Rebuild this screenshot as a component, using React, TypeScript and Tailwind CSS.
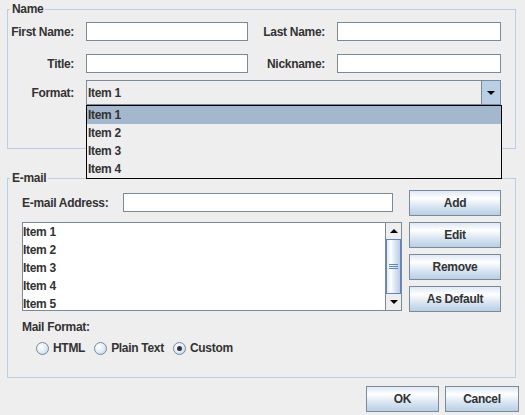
import React from "react";

function TextField({ className = "" }: { className?: string }) {
  return <div className={`h-[19px] bg-white border border-[#7a8a99] ${className}`} />;
}

function Btn({ children, className = "" }: { children: React.ReactNode; className?: string }) {
  return (
    <button
      className={`h-[26px] border border-[#7a8a99] bg-[linear-gradient(to_bottom,#dde8f3_0%,#ffffff_30%,#dde8f3_60%,#b8cfe5_100%)] text-[12px] font-bold text-[#333333] leading-none ${className}`}
    >
      {children}
    </button>
  );
}

function Radio({ label, checked = false }: { label: string; checked?: boolean }) {
  return (
    <label className="flex items-center gap-[4px]">
      <span className="w-[13px] h-[13px] rounded-full border border-[#7a8a99] bg-[radial-gradient(circle_at_35%_35%,#ffffff_0%,#e6eef7_45%,#b8cfe5_100%)] flex items-center justify-center">
        {checked && <span className="w-[5px] h-[5px] rounded-full bg-[#333333]" />}
      </span>
      {label}
    </label>
  );
}

function UpArrow() {
  return <span className="w-0 h-0 border-x-[4px] border-x-transparent border-b-[4px] border-b-black" />;
}

function DownArrow() {
  return <span className="w-0 h-0 border-x-[4px] border-x-transparent border-t-[4px] border-t-black" />;
}

function Label({ children, className = "" }: { children: React.ReactNode; className?: string }) {
  return <span className={`flex justify-end whitespace-nowrap ${className}`}>{children}</span>;
}

export default function App() {
  const comboItems = ["Item 1", "Item 2", "Item 3", "Item 4"];
  const listItems = ["Item 1", "Item 2", "Item 3", "Item 4", "Item 5"];

  return (
    <div className="w-[525px] h-[415px] overflow-hidden bg-[#eeeeee] pt-[2px] text-[12px] font-bold text-[#333333] font-['Liberation_Sans',Arial,sans-serif] leading-[14px] tracking-[-0.3px]">

      {/* Name group */}
      <fieldset className="ml-[7px] w-[509px] border border-[#b8cfe5] pt-[6px] pb-[43px]">
        <legend className="ml-[2px] px-[2px] leading-[14px]">Name</legend>

        <div className="flex items-center">
          <Label className="w-[66px]">First Name:</Label>
          <TextField className="ml-[12px] w-[162px]" />
          <Label className="w-[77px]">Last Name:</Label>
          <TextField className="ml-[12px] w-[164px]" />
        </div>

        <div className="flex items-center mt-[13px]">
          <Label className="w-[66px]">Title:</Label>
          <TextField className="ml-[12px] w-[162px]" />
          <Label className="w-[77px]">Nickname:</Label>
          <TextField className="ml-[12px] w-[164px]" />
        </div>

        <div className="flex items-center mt-[7px]">
          <Label className="w-[66px]">Format:</Label>
          <div className="relative ml-[12px] w-[415px] h-[25px] flex border border-[#7a8a99] bg-[#eeeeee]">
            <span className="flex-1 pl-[1px] flex items-center">Item 1</span>
            <span className="w-[19px] border-l border-[#7a8a99] bg-[#b8cfe5] flex items-center justify-center">
              <DownArrow />
            </span>

            {/* open popup */}
            <div className="absolute left-[-1px] top-[24px] w-[416px] border border-black bg-[#eeeeee] z-10">
              {comboItems.map((it, i) => (
                <div
                  key={it}
                  className={`h-[18px] leading-[18px] pl-[1px] ${i === 0 ? "bg-[#a3b8cc]" : ""}`}
                >
                  {it}
                </div>
              ))}
            </div>
          </div>
        </div>
      </fieldset>

      {/* E-mail group */}
      <fieldset className="ml-[7px] mt-[22px] w-[509px] border border-[#b8cfe5] pb-[22px]">
        <legend className="ml-[2px] px-[2px] leading-[14px]">E-mail</legend>

        <div className="flex">
          <div className="ml-[14px] w-[380px] pt-[8px]">
            <div className="flex items-center">
              <span className="w-[101px] whitespace-nowrap">E-mail Address:</span>
              <TextField className="w-[270px]" />
            </div>

            <div className="mt-[10px] h-[89px] flex bg-white border border-[#7a8a99]">
              <div className="flex-1">
                {listItems.map((it) => (
                  <div key={it} className="h-[18px] leading-[18px]">{it}</div>
                ))}
              </div>
              {/* scrollbar */}
              <div className="w-[16px] flex flex-col border-l border-[#7a8a99] bg-[#eeeeee]">
                <div className="h-[16px] flex items-center justify-center">
                  <UpArrow />
                </div>
                <div className="flex-1 border border-[#6382bf] bg-[linear-gradient(to_right,#dde8f3_0%,#ffffff_30%,#dde8f3_60%,#b8cfe5_100%)] flex flex-col items-center justify-center gap-[1px]">
                  <span className="w-[9px] h-[1px] bg-[#6382bf]" />
                  <span className="w-[9px] h-[1px] bg-[#6382bf]" />
                  <span className="w-[9px] h-[1px] bg-[#6382bf]" />
                </div>
                <div className="h-[16px] flex items-center justify-center">
                  <DownArrow />
                </div>
              </div>
            </div>

            <div className="mt-[9px]">Mail Format:</div>

            <div className="mt-[7px] ml-[14px] flex items-center gap-[9px] h-[14px]">
              <Radio label="HTML" />
              <Radio label="Plain Text" />
              <Radio label="Custom" checked />
            </div>
          </div>

          <div className="ml-[7px] w-[92px] pt-[5px] flex flex-col gap-[6px]">
            <Btn>Add</Btn>
            <Btn>Edit</Btn>
            <Btn>Remove</Btn>
            <Btn>As Default</Btn>
          </div>
        </div>
      </fieldset>

      {/* dialog buttons */}
      <div className="mt-[8px] pr-[6px] flex justify-end gap-[6px]">
        <Btn className="w-[73px]">OK</Btn>
        <Btn className="w-[74px]">Cancel</Btn>
      </div>
    </div>
  );
}
